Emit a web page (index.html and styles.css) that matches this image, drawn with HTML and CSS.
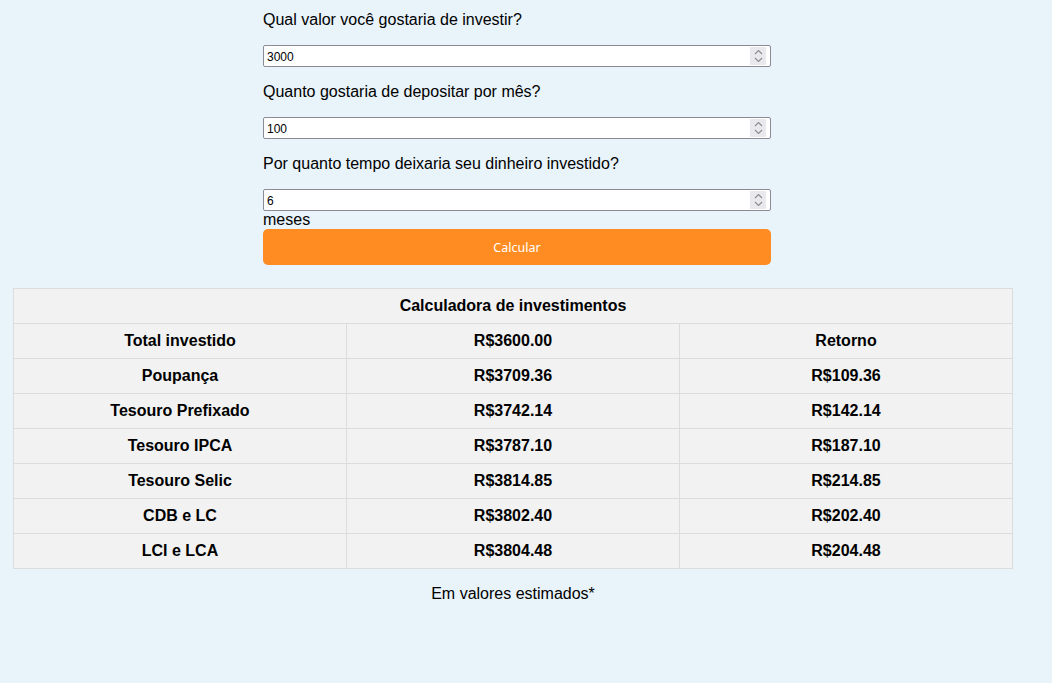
FILE: index.html
```html
<!DOCTYPE html>
<html lang="pt-BR">
<head>
<meta charset="utf-8">
<title>Calculadora de investimentos</title>
<link rel="stylesheet" href="styles.css">
</head>
<body>
<div class="page">
  <form class="form">
    <p class="label first">Qual valor você gostaria de investir?</p>
    <div class="field">
      <input class="num" type="number" value="3000">
      <span class="spin"><svg width="9" height="14" viewBox="0 0 9 14"><path d="M1 5 L4.5 1.5 L8 5 M1 9 L4.5 12.5 L8 9" fill="none" stroke="#8c8c8c" stroke-width="1.1"/></svg></span>
    </div>
    <p class="label">Quanto gostaria de depositar por mês?</p>
    <div class="field">
      <input class="num" type="number" value="100">
      <span class="spin"><svg width="9" height="14" viewBox="0 0 9 14"><path d="M1 5 L4.5 1.5 L8 5 M1 9 L4.5 12.5 L8 9" fill="none" stroke="#8c8c8c" stroke-width="1.1"/></svg></span>
    </div>
    <p class="label">Por quanto tempo deixaria seu dinheiro investido?</p>
    <div class="field">
      <input class="num" type="number" value="6">
      <span class="spin"><svg width="9" height="14" viewBox="0 0 9 14"><path d="M1 5 L4.5 1.5 L8 5 M1 9 L4.5 12.5 L8 9" fill="none" stroke="#8c8c8c" stroke-width="1.1"/></svg></span>
    </div>
    <div class="unit">meses</div>
    <button type="button" class="btn">Calcular</button>
  </form>

  <table class="tbl">
    <tr><th colspan="3">Calculadora de investimentos</th></tr>
    <tr><td>Total investido</td><td>R$3600.00</td><td>Retorno</td></tr>
    <tr><td>Poupança</td><td>R$3709.36</td><td>R$109.36</td></tr>
    <tr><td>Tesouro Prefixado</td><td>R$3742.14</td><td>R$142.14</td></tr>
    <tr><td>Tesouro IPCA</td><td>R$3787.10</td><td>R$187.10</td></tr>
    <tr><td>Tesouro Selic</td><td>R$3814.85</td><td>R$214.85</td></tr>
    <tr><td>CDB e LC</td><td>R$3802.40</td><td>R$202.40</td></tr>
    <tr><td>LCI e LCA</td><td>R$3804.48</td><td>R$204.48</td></tr>
  </table>
  <p class="note">Em valores estimados*</p>
</div>
</body>
</html>
```
FILE: styles.css
```css
html, body {
  margin: 0;
  padding: 0;
  background: #e8f3fa;
  font-family: "Liberation Sans", Arial, sans-serif;
  font-size: 16px;
  line-height: 18px;
  color: #000;
}
.page {
  width: 1000px;
  margin-left: 13px;
  padding-top: 11px;
}
.form {
  width: 508px;
  margin-left: 250px;
}
.label {
  margin: 16px 0;
}
.label.first {
  margin-top: 0;
}
.field {
  position: relative;
  height: 22px;
}
.num {
  display: block;
  box-sizing: border-box;
  width: 100%;
  height: 22px;
  margin: 0;
  padding: 1px 3px 0;
  border: 1px solid #8b8b95;
  border-radius: 2px;
  background: #fff;
  font-family: "Liberation Sans", Arial, sans-serif;
  font-size: 12px;
  color: #000;
  outline: none;
  -moz-appearance: textfield;
}
.num::-webkit-inner-spin-button,
.num::-webkit-outer-spin-button {
  -webkit-appearance: none;
  margin: 0;
}
.spin {
  position: absolute;
  top: 2px;
  right: 5px;
  width: 16px;
  height: 18px;
  background: #e9e9ed;
  display: flex;
  align-items: center;
  justify-content: center;
}
.unit {
  height: 18px;
}
.btn {
  display: block;
  width: 100%;
  height: 36px;
  border: none;
  border-radius: 5px;
  background: #ff8c22;
  color: #fff;
  font-family: "Noto Sans", "Open Sans", sans-serif;
  font-size: 12.5px;
  cursor: pointer;
}
.tbl {
  margin-top: 23px;
  width: 1000px;
  border-collapse: collapse;
  background: #f2f2f2;
  table-layout: fixed;
}
.tbl th, .tbl td {
  border: 1px solid #dcdcdc;
  padding: 8px 4px;
  height: 18px;
  text-align: center;
  font-weight: bold;
  font-size: 16px;
  line-height: 18px;
}
.note {
  margin: 16px 0 0;
  text-align: center;
}
```
